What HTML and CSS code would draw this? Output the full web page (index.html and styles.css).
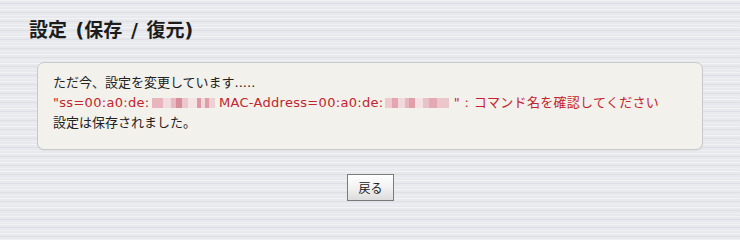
FILE: index.html
```html
<!DOCTYPE html>
<html lang="ja">
<head>
<meta charset="utf-8">
<title>設定 (保存 / 復元)</title>
<link rel="stylesheet" href="styles.css">
</head>
<body>
<div class="page">
  <h1 class="title">設定 (保存 / 復元)</h1>
  <div class="panel">
    <p class="line">ただ今、設定を変更しています.....</p>
    <p class="line error">"ss=00:a0:de:<span class="blur blur-a"></span> MAC-Address=00:a0:de:<span class="blur blur-b"></span> " : コマンド名を確認してください</p>
    <p class="line">設定は保存されました。</p>
  </div>
  <div class="actions">
    <button class="btn" type="button">戻る</button>
  </div>
</div>
</body>
</html>
```

FILE: styles.css
```css
html, body {
  margin: 0;
  padding: 0;
}
body {
  width: 740px;
  height: 224px;
  overflow: hidden;
  font-family: "DejaVu Sans", "Noto Sans CJK JP", sans-serif;
  color: #222;
  background-color: #e7e9ed;
  background-image:
    repeating-linear-gradient(180deg,
      rgba(255,255,255,0.45) 0px, rgba(255,255,255,0.45) 1px,
      rgba(255,255,255,0) 1px, rgba(255,255,255,0) 3px,
      rgba(196,200,208,0.28) 3px, rgba(196,200,208,0.28) 4px,
      rgba(255,255,255,0) 4px, rgba(255,255,255,0) 6px,
      rgba(255,255,255,0.25) 6px, rgba(255,255,255,0.25) 7px,
      rgba(255,255,255,0) 7px, rgba(255,255,255,0) 9px);
}
.page {
  display: flex;
  flex-direction: column;
  padding: 17px 37px 0 29px;
}
.title {
  margin: 0;
  font-family: "DejaVu Sans", "Noto Sans CJK JP", sans-serif;
  font-size: 19px;
  font-weight: bold;
  line-height: 26px;
  color: #1c1c1c;
  word-spacing: 2px;
}
.panel {
  margin: 19px 0 0 8px;
  height: 88px;
  box-sizing: border-box;
  padding: 10px 15px 0;
  background: #f2f1ec;
  border: 1px solid #c8c9cc;
  border-radius: 7px;
  box-shadow: 0 1px 1px rgba(0,0,0,0.05);
}
.line {
  margin: 0;
  font-size: 13px;
  line-height: 20px;
  height: 20px;
  color: #222;
  white-space: nowrap;
}
.error {
  color: #c4232b;
  letter-spacing: 0.3px;
}
.blur {
  display: inline-block;
  vertical-align: -1px;
  height: 10px;
  margin-left: 2px;
}
.blur-a {
  width: 63px;
  background: linear-gradient(90deg,
    #e9b5bd 0, #e9b5bd 11px,
    #f2dbde 11px, #f2dbde 19px,
    #e7b9c0 19px, #e7b9c0 24px,
    #d98f9b 24px, #d98f9b 30px,
    #ecc8cd 30px, #ecc8cd 36px,
    #f4e4e5 36px, #f4e4e5 45px,
    #dc9aa5 45px, #dc9aa5 49px,
    #f1d6da 49px, #f1d6da 53px,
    #dd9ea8 53px, #dd9ea8 57px,
    #efd0d4 57px, #efd0d4 63px);
}
.blur-b {
  width: 64px;
  background: linear-gradient(90deg,
    #eec9ce 0, #eec9ce 7px,
    #e3a6b0 7px, #e3a6b0 13px,
    #f1d8db 13px, #f1d8db 20px,
    #e7b6be 20px, #e7b6be 24px,
    #dfa0aa 24px, #dfa0aa 30px,
    #f3e1e3 30px, #f3e1e3 38px,
    #eac1c7 38px, #eac1c7 44px,
    #e3aab3 44px, #e3aab3 52px,
    #ecc6cb 52px, #ecc6cb 64px);
}
.actions {
  display: flex;
  justify-content: center;
  padding-top: 24px;
  padding-left: 9px;
}
.btn {
  width: 47px;
  height: 27px;
  padding: 0;
  font-family: "Noto Sans CJK JP", sans-serif;
  font-size: 12px;
  line-height: 1;
  color: #222;
  border: 1px solid #7b7b7b;
  border-radius: 0;
  background: linear-gradient(180deg, #ffffff 0%, #f2f2f2 50%, #dcdcdc 100%);
}
```
